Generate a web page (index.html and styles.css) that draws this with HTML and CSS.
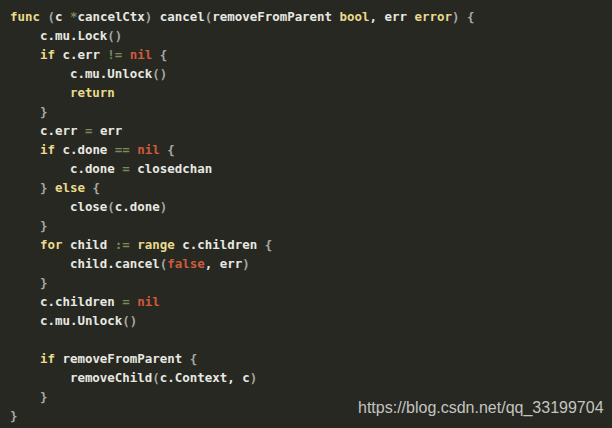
FILE: index.html
```html
<!DOCTYPE html>
<html>
<head>
<meta charset="utf-8">
<link rel="stylesheet" href="styles.css">
</head>
<body>
<div class="frame">
<pre class="code"><span class="k">func</span> <span class="p">(</span>c <span class="o">*</span>cancelCtx<span class="p">)</span> cancel<span class="p">(</span>removeFromParent <span class="k">bool</span>, err <span class="k">error</span><span class="p">)</span> <span class="p">{</span>
    c.mu.Lock<span class="p">()</span>
    <span class="k">if</span> c.err <span class="o">!=</span> <span class="n">nil</span> <span class="p">{</span>
        c.mu.Unlock<span class="p">()</span>
        <span class="k">return</span>
    <span class="p">}</span>
    c.err <span class="o">=</span> err
    <span class="k">if</span> c.done <span class="o">==</span> <span class="n">nil</span> <span class="p">{</span>
        c.done <span class="o">=</span> closedchan
    <span class="p">}</span> <span class="k">else</span> <span class="p">{</span>
        close<span class="p">(</span>c.done<span class="p">)</span>
    <span class="p">}</span>
    <span class="k">for</span> child <span class="o">:=</span> <span class="k">range</span> c.children <span class="p">{</span>
        child.cancel<span class="p">(</span><span class="n">false</span>, err<span class="p">)</span>
    <span class="p">}</span>
    c.children <span class="o">=</span> <span class="n">nil</span>
    c.mu.Unlock<span class="p">()</span>

    <span class="k">if</span> removeFromParent <span class="p">{</span>
        removeChild<span class="p">(</span>c.Context, c<span class="p">)</span>
    <span class="p">}</span>
<span class="p">}</span></pre>
<div class="mark">https://blog.csdn.net/qq_33199704</div>
</div>
</body>
</html>
```
FILE: styles.css
```css
html, body {
  margin: 0;
  padding: 0;
  background: #272822;
}
.frame {
  position: relative;
  width: 612px;
  height: 428px;
  overflow: hidden;
  background: #272822;
}
.code {
  margin: 0;
  padding: 7px 0 0 10px;
  font-family: "DejaVu Sans Mono", monospace;
  font-size: 12.45px;
  line-height: 19px;
  font-weight: bold;
  color: #e8e8e2;
}
.k { color: #e8dc8c; }
.n { color: #cf5b3c; }
.o { color: #7c8a5c; }
.p { color: #a8a8a2; }
.mark {
  position: absolute;
  left: 358px;
  top: 398px;
  font-family: "Liberation Sans", Arial, sans-serif;
  font-size: 16px;
  line-height: 20px;
  color: #c4c4c0;
  white-space: nowrap;
}
```
